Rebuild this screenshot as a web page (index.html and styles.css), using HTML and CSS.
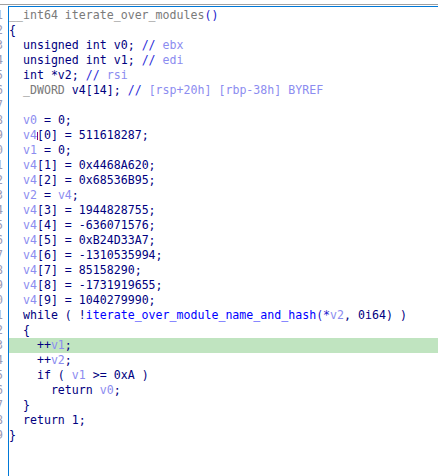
FILE: index.html
```html
<!DOCTYPE html>
<html>
<head>
<meta charset="utf-8">
<link rel="stylesheet" href="styles.css">
</head>
<body>
<div class="top"></div>
<div class="main">
  <div class="gutter">
    <div class="ln">1</div><div class="ln">2</div><div class="ln">3</div><div class="ln">4</div><div class="ln">5</div><div class="ln">6</div><div class="ln">7</div><div class="ln">8</div><div class="ln">9</div><div class="ln">10</div><div class="ln">11</div><div class="ln">12</div><div class="ln">13</div><div class="ln">14</div><div class="ln">15</div><div class="ln">16</div><div class="ln">17</div><div class="ln">18</div><div class="ln">19</div><div class="ln">20</div><div class="ln">21</div><div class="ln">22</div><div class="ln">23</div><div class="ln">24</div><div class="ln">25</div><div class="ln">26</div><div class="ln">27</div><div class="ln">28</div><div class="ln">29</div>
  </div>
  <div class="code">
    <div class="line"><span class="g">__int64 iterate_over_modules</span><span class="b">()</span></div>
    <div class="line">{</div>
    <div class="line">  unsigned int v0; <span class="c">//</span> <span class="l">ebx</span></div>
    <div class="line">  unsigned int v1; <span class="c">//</span> <span class="l">edi</span></div>
    <div class="line">  int *v2; <span class="c">//</span> <span class="l">rsi</span></div>
    <div class="line">  <span class="g">_DWORD</span> v4[14]; <span class="c">//</span> <span class="l">[rsp+20h] [rbp-38h] BYREF</span></div>
    <div class="line"> </div>
    <div class="line">  <span class="l">v0</span> = 0;</div>
    <div class="line">  <span class="l">v4</span><span class="caret"></span>[0] = 511618287;</div>
    <div class="line">  <span class="l">v1</span> = 0;</div>
    <div class="line">  <span class="l">v4</span>[1] = 0x4468A620;</div>
    <div class="line">  <span class="l">v4</span>[2] = 0x68536B95;</div>
    <div class="line">  <span class="l">v2</span> = <span class="l">v4</span>;</div>
    <div class="line">  <span class="l">v4</span>[3] = 1944828755;</div>
    <div class="line">  <span class="l">v4</span>[4] = -636071576;</div>
    <div class="line">  <span class="l">v4</span>[5] = 0xB24D33A7;</div>
    <div class="line">  <span class="l">v4</span>[6] = -1310535994;</div>
    <div class="line">  <span class="l">v4</span>[7] = 85158290;</div>
    <div class="line">  <span class="l">v4</span>[8] = -1731919655;</div>
    <div class="line">  <span class="l">v4</span>[9] = 1040279990;</div>
    <div class="line">  while ( !<span class="f">iterate_over_module_name_and_hash</span><span class="b">(*</span><span class="l">v2</span>, 0i64) )</div>
    <div class="line">  {</div>
    <div class="line hl">    ++<span class="l">v1</span>;</div>
    <div class="line">    ++<span class="l">v2</span>;</div>
    <div class="line">    if ( <span class="l">v1</span> &gt;= 0xA )</div>
    <div class="line">      return <span class="l">v0</span>;</div>
    <div class="line">  }</div>
    <div class="line">  return 1;</div>
    <div class="line">}</div>
  </div>
</div>
</body>
</html>
```

FILE: styles.css
```css
html, body {
  margin: 0;
  padding: 0;
  background: #ffffff;
}
body {
  font-family: "DejaVu Sans Mono", "Liberation Mono", monospace;
  font-size: 11.6px;
  color: #000080;
  overflow: hidden;
}
.top {
  height: 4px;
  border-bottom: 1px solid #a0a0a0;
}
.main {
  display: flex;
  height: calc(100vh - 5px);
}
.gutter {
  width: 8px;
  flex: none;
  overflow: hidden;
  padding-top: 3px;
  color: #9a9ab4;
}
.ln {
  height: 15px;
  line-height: 15px;
  display: flex;
  justify-content: flex-end;
  padding-right: 5px;
  white-space: pre;
}
.code {
  flex: 1;
  margin-top: 1px;
  border-top: 1px solid #0078d7;
  border-left: 1px solid #0078d7;
  padding-top: 1px;
}
.line {
  height: 15px;
  line-height: 15px;
  white-space: pre;
}
.hl {
  background: #c0e4c0;
}
.g { color: #7a7a7a; }
.b { color: #1a1acc; }
.c { color: #2a2ad8; }
.l { color: #8c8cf0; }
.f { color: #0000ff; }
.caret {
  display: inline-block;
  width: 1px;
  height: 8px;
  margin-right: -1px;
  background: #800080;
  vertical-align: -1px;
}
```
